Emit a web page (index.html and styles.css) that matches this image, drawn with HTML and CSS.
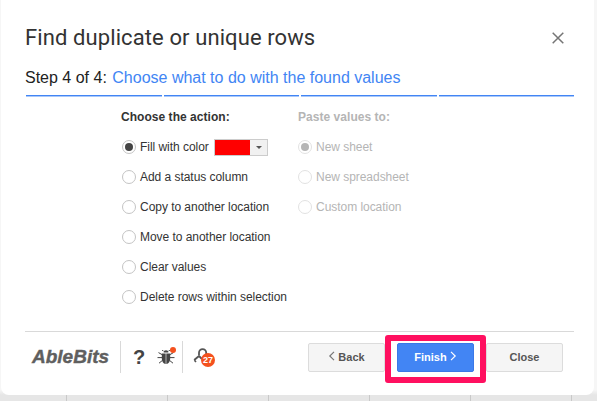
FILE: index.html
```html
<!DOCTYPE html>
<html lang="en">
<head>
  <meta charset="UTF-8" />
  <title>Find duplicate or unique rows</title>
  <link rel="stylesheet" href="styles.css">
</head>
<body>
  <div class="sheet">
    <div class="dialog">
      <div class="head">
        <h1>Find duplicate or unique rows</h1>
        <svg class="close" width="14" height="14" viewBox="0 0 14 14"><path d="M1.7 1.7l10.6 10.6M12.3 1.7L1.7 12.3" stroke="#757575" stroke-width="1.5" fill="none"/></svg>
      </div>
      <div class="step">Step 4 of 4: <span>Choose what to do with the found values</span></div>
      <div class="progress"><i></i><i></i><i></i><i></i></div>

      <div class="columns">
        <div class="col-actions">
          <div class="col-title">Choose the action:</div>
          <div class="opt"><b class="radio on"></b>Fill with color
            <div class="picker"><span class="swatch"></span><span class="arrow"></span></div>
          </div>
          <div class="opt"><b class="radio"></b>Add a status column</div>
          <div class="opt"><b class="radio"></b>Copy to another location</div>
          <div class="opt"><b class="radio"></b>Move to another location</div>
          <div class="opt"><b class="radio"></b>Clear values</div>
          <div class="opt"><b class="radio"></b>Delete rows within selection</div>
        </div>
        <div class="col-paste">
          <div class="col-title">Paste values to:</div>
          <div class="opt"><b class="radio on"></b>New sheet</div>
          <div class="opt"><b class="radio"></b>New spreadsheet</div>
          <div class="opt"><b class="radio"></b>Custom location</div>
        </div>
      </div>

      <div class="foot">
        <div class="logo">AbleBits</div>
        <div class="icons">
          <span class="help">?</span>
          <span class="bug">
            <svg width="18" height="14" viewBox="0 0 18 14"><path d="M6.6 2.6a2.4 2.4 0 0 1 4.8 0z" fill="#444"/><path d="M4.8 3.4h3.9V14C6.2 13.8 4.8 11.5 4.8 8.5zM13.2 3.4H9.3V14c2.5-.2 3.9-2.5 3.9-5.5z" fill="#444"/><path d="M6.5 1L5 0M11.5 1L13 0M5 4.6L1.5 2.6M5 7.6H.5M5.2 10.6L2 13.2M13 4.6l3.5-2M13 7.6h4.5M12.8 10.6l3.2 2.6" stroke="#444" stroke-width="1" fill="none"/></svg>
            <i class="dot"></i>
          </span>
        </div>
        <div class="key">
          <svg width="16" height="16" viewBox="0 0 16 16"><path d="M6 7V4.8a3.6 3.6 0 0 1 7.2 0V7" stroke="#555" stroke-width="1.8" fill="none"/><path d="M1.2 12L6 8l3 3" stroke="#555" stroke-width="1.9" fill="none"/><path d="M3 14l-1.6-1.8" stroke="#555" stroke-width="1.6" fill="none"/></svg>
          <span class="count">27</span>
        </div>
        <div class="buttons">
          <button class="btn"><svg width="7" height="10" viewBox="0 0 7 10"><path d="M6 .8L1.8 5 6 9.2" stroke="#777" stroke-width="1.2" fill="none"/></svg> Back</button>
          <button class="btn primary">Finish <svg width="7" height="10" viewBox="0 0 7 10"><path d="M1 .8L5.2 5 1 9.2" stroke="#fff" stroke-width="1.2" fill="none"/></svg></button>
          <button class="btn">Close</button>
        </div>
      </div>
    </div>
  </div>
</body>
</html>
```

FILE: styles.css
```css
body {
  margin: 0;
  width: 597px;
  height: 401px;
  overflow: hidden;
  font-family: "Liberation Sans", Arial, sans-serif;
  color: #333;
}
.sheet {
  height: 401px;
  box-sizing: border-box;
  padding: 0 3px 6px 1px;
  background:
    repeating-linear-gradient(to right, transparent 0 66px, #c9c9c9 66px 67px, transparent 67px 101px),
    linear-gradient(to bottom, #f6f6f6 390px, #e6e6e6 395px);
}
.dialog {
  height: 395px;
  box-sizing: border-box;
  padding: 0 20px 0 24px;
  background: #fff;
  border-radius: 0 0 8px 8px;
}
.head {
  display: flex;
  justify-content: space-between;
  align-items: center;
  padding-top: 24px;
  height: 26px;
}
h1 {
  margin: 0;
  font-family: Roboto, sans-serif;
  font-size: 22px;
  font-weight: 400;
  letter-spacing: 0.1px;
  color: #333;
}
.close {
  margin: 2px 9px 0 0;
}
.step {
  margin-top: 18px;
  font-size: 16px;
  line-height: 20px;
  color: #222;
}
.step span {
  margin-left: 1px;
  color: #4285f4;
}
.progress {
  display: flex;
  gap: 2px;
  margin: 7px 0 0 1px;
}
.progress i {
  flex: 1;
  height: 1px;
  background: #4285f4;
  box-shadow: 0 1px 0 #a9c8fa;
}
.columns {
  display: flex;
  height: 222px;
  padding: 13px 0 0 96px;
  border-bottom: 1px solid #d9d9d9;
  font-size: 12px;
}
.col-actions {
  width: 176px;
}
.col-title {
  font-weight: bold;
  line-height: 16px;
  margin-bottom: 7px;
  letter-spacing: 0.04px;
}
.col-paste {
  color: #b5b5b5;
}
.col-paste .col-title {
  margin-left: 1px;
}
.opt {
  display: flex;
  align-items: center;
  height: 30px;
  letter-spacing: -0.04px;
}
.radio {
  position: relative;
  flex: none;
  width: 12px;
  height: 12px;
  margin: 0 4px 0 1px;
  border: 1px solid #c4c4c4;
  border-radius: 50%;
}
.radio.on::after {
  content: "";
  position: absolute;
  left: 2px;
  top: 2px;
  width: 8px;
  height: 8px;
  border-radius: 50%;
  background: #444;
}
.col-paste .radio {
  border-color: #e2e2e2;
}
.col-paste .radio.on::after {
  background: #b5b5b5;
}
.picker {
  display: flex;
  width: 52px;
  height: 15px;
  margin-left: 5px;
  border: 1px solid #ccc;
  background: #f1f1f1;
}
.swatch {
  width: 35px;
  background: #f00;
}
.arrow {
  margin: 6px 0 0 6px;
  width: 0;
  height: 0;
  border: 3px solid transparent;
  border-top: 3px solid #555;
}
.foot {
  display: flex;
  align-items: center;
  height: 50px;
}
.logo {
  width: 96px;
  height: 32px;
  box-sizing: border-box;
  padding-left: 7px;
  border-right: 1px solid #d9d9d9;
  font-size: 19px;
  font-weight: bold;
  font-style: italic;
  line-height: 32px;
  color: #5f5f5f;
  -webkit-text-stroke: 0.4px #5f5f5f;
}
.icons {
  display: flex;
  align-items: center;
  gap: 12px;
  width: 62px;
  height: 32px;
  box-sizing: border-box;
  padding-left: 12px;
  border-right: 1px solid #d9d9d9;
}
.help {
  font-size: 20px;
  font-weight: bold;
  color: #444;
}
.bug {
  position: relative;
  display: flex;
}
.dot {
  position: absolute;
  left: 13px;
  top: -3px;
  width: 6px;
  height: 6px;
  border-radius: 50%;
  background: #f4511e;
}
.key {
  position: relative;
  display: flex;
  align-items: center;
  height: 32px;
  padding-left: 10px;
}
.key svg {
  margin-top: -3px;
}
.count {
  position: absolute;
  left: 18px;
  top: 12px;
  width: 14px;
  height: 14px;
  border-radius: 50%;
  background: #f4511e;
  color: #fff;
  font-size: 9px;
  font-weight: bold;
  line-height: 14px;
  text-align: center;
}
.buttons {
  display: flex;
  gap: 12px;
  margin-left: auto;
  margin-right: 11px;
}
.btn {
  width: 77px;
  height: 29px;
  padding: 0;
  background: #f5f5f5;
  border: 1px solid #dcdcdc;
  border-radius: 2px;
  font-family: "Liberation Sans", Arial, sans-serif;
  font-size: 11px;
  font-weight: bold;
  color: #555;
}
.primary {
  position: relative;
  background: #4285f4;
  border-color: #3b78e7;
  color: #fff;
}
/* the pink highlight drawn around the Finish button */
.primary::before {
  content: "";
  position: absolute;
  top: -9px;
  right: -13px;
  bottom: -12px;
  left: -13px;
  border: 6px solid #ff1060;
  border-radius: 3px;
}
```
